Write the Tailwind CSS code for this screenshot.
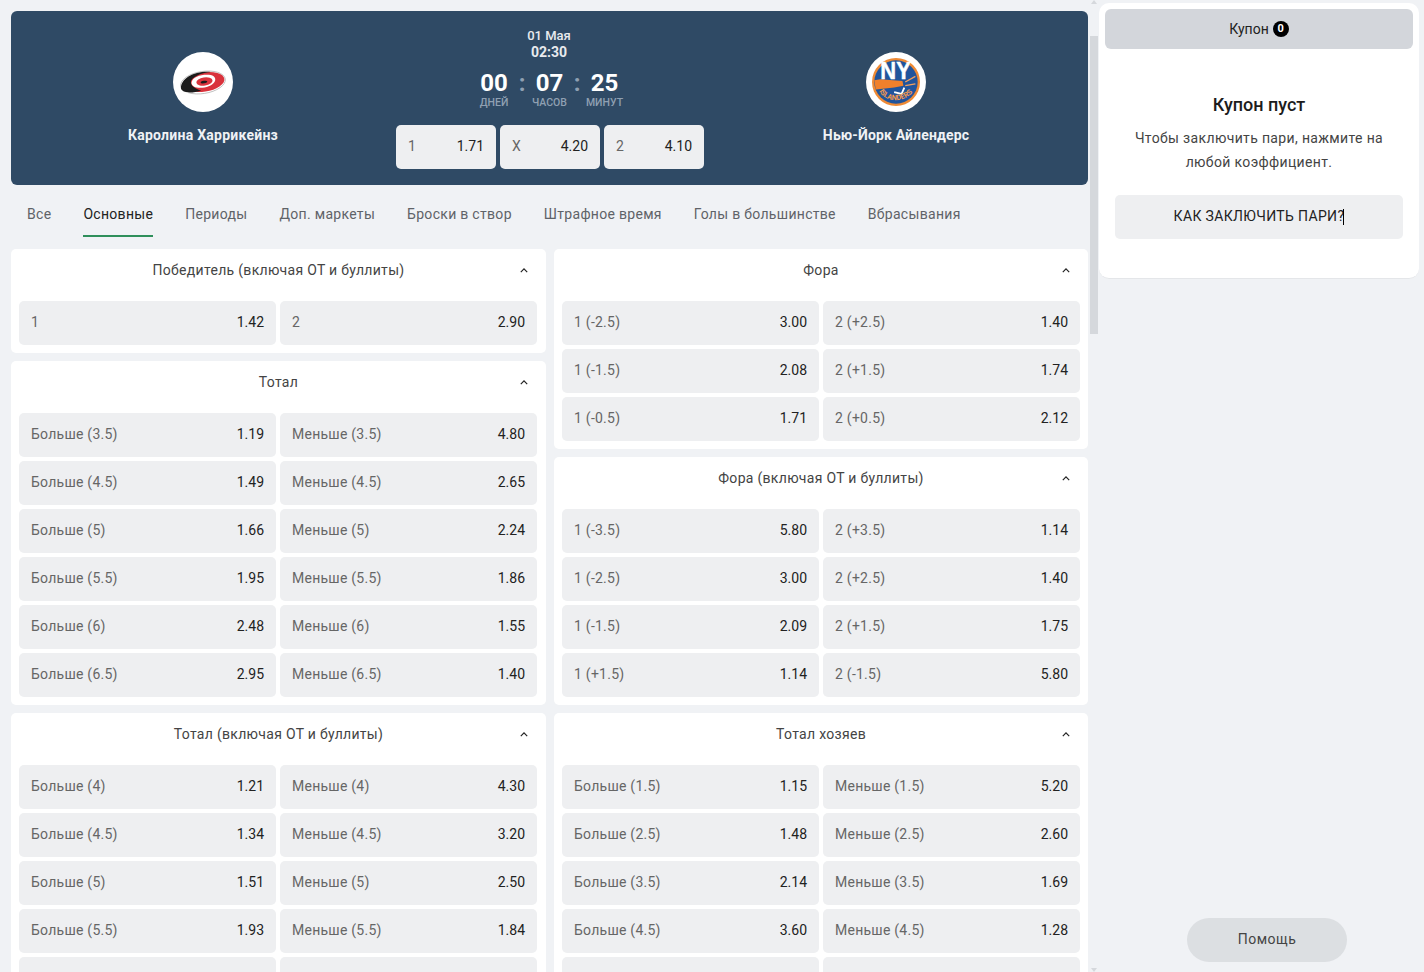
<!DOCTYPE html>
<html lang="ru">
<head>
    <meta charset="UTF-8">
    <meta name="viewport" content="width=device-width, initial-scale=1.0">
    <title>Каролина Харрикейнз - Нью-Йорк Айлендерс</title>
    <script src="https://cdn.jsdelivr.net/npm/@tailwindcss/browser@4"></script>
</head>
<body class="relative h-screen overflow-hidden bg-[#f0f2f5] font-['Roboto',sans-serif] text-[14px]">
    <div class="flex h-full items-start">
        <!-- Main column -->
        <main class="w-[1077px] ml-[11px] mt-[11px] shrink-0">
            <!-- Match header -->
            <section class="h-[174px] bg-[#2f4a65] rounded-md flex text-white relative">
                <div class="absolute left-[116px] top-[41px] w-[152px] flex flex-col items-center">
                    <div class="w-[60px] h-[60px] rounded-full bg-white flex items-center justify-center">
                        <svg viewBox="0 0 50 30" class="w-[48px] h-[29px]">
                            <ellipse cx="25" cy="15" rx="23.500" ry="11.500" transform="rotate(-9 25 15)" fill="#fff" stroke="#a8a8a8" stroke-width="0.7"/>
                            <ellipse cx="26" cy="14.500" rx="21.500" ry="10" transform="rotate(-9 26 14.500)" fill="#d9323c"/>
                            <path d="M2 21C2 11 15 3 33 4C24 5 16 8 13 12.500C11 16 14 21 23 23.500C13 26.500 3 26 2 21Z" fill="#1b1b1b"/>
                            <path d="M13 15C14 9 23 6.500 31 7C37 7.500 39 11 37 14.500C34 19 27 21 20 20.500C15.500 20 13 18 13 15Z" fill="#fff"/>
                            <ellipse cx="26.500" cy="14" rx="8.500" ry="4.300" transform="rotate(-9 26.500 14)" fill="#d9323c"/>
                            <ellipse cx="26" cy="14.500" rx="3.500" ry="1.300" transform="rotate(-9 26 14.500)" fill="#1b1b1b"/>
                        </svg>
                    </div>
                    <div class="mt-[9px] text-[14px] leading-[28px] font-bold text-[#f0f2f5] whitespace-nowrap tracking-[0.25px]">Каролина Харрикейнз</div>
                </div>

                <div class="absolute left-[385px] top-[16px] w-[308px] flex flex-col items-center">
                    <div class="pr-[2px] text-[13px] leading-[17px] font-medium text-[#e8eaee]">01 Мая</div>
                    <div class="pr-[2px] text-[14px] leading-[17px] font-bold text-[#e8eaee]">02:30</div>
                    <div class="pr-[2px] mt-[8px] flex items-start">
                        <div class="w-[56px] flex flex-col items-center">
                            <div class="text-[24px] leading-[29px] font-bold">00</div>
                            <div class="text-[10.5px] leading-[10px] font-medium text-[#8fa0b2]">ДНЕЙ</div>
                        </div>
                        <div class="text-[24px] leading-[29px] font-bold text-[#8fa0b2] w-0 flex justify-center">:</div>
                        <div class="w-[55px] flex flex-col items-center">
                            <div class="text-[24px] leading-[29px] font-bold">07</div>
                            <div class="text-[10.5px] leading-[10px] font-medium text-[#8fa0b2]">ЧАСОВ</div>
                        </div>
                        <div class="text-[24px] leading-[29px] font-bold text-[#8fa0b2] w-0 flex justify-center">:</div>
                        <div class="w-[55px] flex flex-col items-center">
                            <div class="text-[24px] leading-[29px] font-bold">25</div>
                            <div class="text-[10.5px] leading-[10px] font-medium text-[#8fa0b2]">МИНУТ</div>
                        </div>
                    </div>
                    <div class="mt-[17px] flex gap-1">
                        <button class="w-[100px] h-[44px] px-3 pb-[2px] flex items-center justify-between rounded-[5px] bg-[#eeeff1] tracking-[0.25px]"><span class="text-[#666]">1</span><span class="text-[#222] tracking-normal">1.71</span></button>
                        <button class="w-[100px] h-[44px] px-3 pb-[2px] flex items-center justify-between rounded-[5px] bg-[#eeeff1] tracking-[0.25px]"><span class="text-[#666]">X</span><span class="text-[#222] tracking-normal">4.20</span></button>
                        <button class="w-[100px] h-[44px] px-3 pb-[2px] flex items-center justify-between rounded-[5px] bg-[#eeeff1] tracking-[0.25px]"><span class="text-[#666]">2</span><span class="text-[#222] tracking-normal">4.10</span></button>
                    </div>
                </div>

                <div class="absolute left-[809px] top-[41px] w-[152px] flex flex-col items-center">
                    <div class="w-[60px] h-[60px] rounded-full bg-white flex items-center justify-center">
                        <svg viewBox="0 0 52 52" class="w-[48px] h-[48px]">
                            <defs><path id="arc" d="M7 35C14 49 37 50 47 33"/></defs>
                            <circle cx="26" cy="26" r="26" fill="#ee8a35"/>
                            <circle cx="26" cy="26" r="23.500" fill="#20549c"/>
                            <path d="M2.500 24L9 23L33 25L34 30L24 32L4 34Z" fill="#f0802c"/>
                            <text x="9" y="23" font-family="Liberation Sans" font-size="26" font-weight="700" fill="#fff" stroke="#fff" stroke-width="0.500" textLength="33" lengthAdjust="spacingAndGlyphs">NY</text>
                            <path d="M35 32L32 39L24 37" fill="none" stroke="#fff" stroke-width="2"/>
                            <path d="M36 26L47 20M36 30L47 28" stroke="#f0a060" stroke-width="1.500"/>
                            <text font-family="Roboto" font-size="8" font-weight="700" fill="#f59a4e"><textPath href="#arc" startOffset="1">ISLANDERS</textPath></text>
                        </svg>
                    </div>
                    <div class="mt-[9px] text-[14px] leading-[28px] font-bold text-[#f0f2f5] whitespace-nowrap tracking-[0.15px]">Нью-Йорк Айлендерс</div>
                </div>
            </section>

            <!-- Tabs -->
            <nav class="h-[52px] pl-4 flex gap-8 tracking-[0.3px] text-[#5f6368] font-[450]">
                <a class="pt-[19px] h-[52px]">Все</a>
                <a class="pt-[19px] h-[52px] text-[#222] border-b-2 border-[#2f8f5b]">Основные</a>
                <a class="pt-[19px] h-[52px]">Периоды</a>
                <a class="pt-[19px] h-[52px]">Доп. маркеты</a>
                <a class="pt-[19px] h-[52px]">Броски в створ</a>
                <a class="pt-[19px] h-[52px]">Штрафное время</a>
                <a class="pt-[19px] h-[52px]">Голы в большинстве</a>
                <a class="pt-[19px] h-[52px]">Вбрасывания</a>
            </nav>

            <!-- Markets -->
            <div class="mt-[12px] flex gap-2 items-start">
                <div id="colLeft" class="w-[535px] flex flex-col gap-2"></div>
                <div id="colRight" class="w-[534px] flex flex-col gap-2"></div>
            </div>
        </main>

        <!-- Scrollbar -->
        <div class="relative w-[8px] h-full ml-[2px] shrink-0 pt-[36px]">
            <svg viewBox="0 0 8 4" class="absolute left-0 top-0 w-[8px] h-[4px]" fill="#d5d8dc"><path d="M4 0l3 4H1z"/></svg>
            <div class="h-[298px] bg-[#d5d8dc]"></div>
            <svg viewBox="0 0 8 4" class="absolute left-0 bottom-0 w-[8px] h-[4px]" fill="#d5d8dc"><path d="M1 0h6L4 4z"/></svg>
        </div>

        <!-- Coupon -->
        <aside class="w-[320px] h-[276px] ml-[1px] mt-[3px] p-[6px] bg-white rounded-[10px] border-b border-[#e4e6e9] shrink-0">
            <button class="w-full h-[40px] rounded-md bg-[#d3d6db] flex items-center justify-center gap-1 text-[#222]">
                Купон
                <span class="w-4 h-4 rounded-full bg-black text-white text-[11px] font-bold flex items-center justify-center">0</span>
            </button>
            <h3 class="mt-[44px] text-center text-[18px] leading-[24px] font-medium text-[#1c1c1c]">Купон пуст</h3>
            <p class="mt-[9px] text-center leading-[24px] tracking-[0.35px] text-[#444]">Чтобы заключить пари, нажмите на<br>любой коэффициент.</p>
            <div class="mx-[10px] mt-[21px] h-[44px] pb-px rounded-[5px] bg-[#eeeff1] flex items-center justify-center tracking-[0.35px] text-[#222]">КАК ЗАКЛЮЧИТЬ ПАРИ?<span class="w-px h-[16px] bg-black -ml-px"></span></div>
        </aside>
    </div>

    <!-- Floating help button -->
    <button class="absolute left-[1187px] top-[918px] w-[160px] h-[44px] pb-[2px] rounded-full bg-[#dcdfe2] text-[#444] tracking-[0.5px]">Помощь</button>

    <script>
        const leftMarkets = [
            { title: "Победитель (включая ОТ и буллиты)", rows: [["1", "1.42", "2", "2.90"]] },
            { title: "Тотал", rows: [
                ["Больше (3.5)", "1.19", "Меньше (3.5)", "4.80"],
                ["Больше (4.5)", "1.49", "Меньше (4.5)", "2.65"],
                ["Больше (5)", "1.66", "Меньше (5)", "2.24"],
                ["Больше (5.5)", "1.95", "Меньше (5.5)", "1.86"],
                ["Больше (6)", "2.48", "Меньше (6)", "1.55"],
                ["Больше (6.5)", "2.95", "Меньше (6.5)", "1.40"]
            ] },
            { title: "Тотал (включая ОТ и буллиты)", rows: [
                ["Больше (4)", "1.21", "Меньше (4)", "4.30"],
                ["Больше (4.5)", "1.34", "Меньше (4.5)", "3.20"],
                ["Больше (5)", "1.51", "Меньше (5)", "2.50"],
                ["Больше (5.5)", "1.93", "Меньше (5.5)", "1.84"],
                ["", "", "", ""]
            ] }
        ];
        const rightMarkets = [
            { title: "Фора", rows: [
                ["1 (-2.5)", "3.00", "2 (+2.5)", "1.40"],
                ["1 (-1.5)", "2.08", "2 (+1.5)", "1.74"],
                ["1 (-0.5)", "1.71", "2 (+0.5)", "2.12"]
            ] },
            { title: "Фора (включая ОТ и буллиты)", rows: [
                ["1 (-3.5)", "5.80", "2 (+3.5)", "1.14"],
                ["1 (-2.5)", "3.00", "2 (+2.5)", "1.40"],
                ["1 (-1.5)", "2.09", "2 (+1.5)", "1.75"],
                ["1 (+1.5)", "1.14", "2 (-1.5)", "5.80"]
            ] },
            { title: "Тотал хозяев", rows: [
                ["Больше (1.5)", "1.15", "Меньше (1.5)", "5.20"],
                ["Больше (2.5)", "1.48", "Меньше (2.5)", "2.60"],
                ["Больше (3.5)", "2.14", "Меньше (3.5)", "1.69"],
                ["Больше (4.5)", "3.60", "Меньше (4.5)", "1.28"],
                ["", "", "", ""]
            ] }
        ];

        function oddButton(label, odd) {
            return `<button class="h-[44px] px-3 pb-[2px] flex items-center justify-between rounded-[5px] bg-[#eeeff1] tracking-[0.25px]"><span class="text-[#666]">${label}</span><span class="text-[#222] tracking-normal">${odd}</span></button>`;
        }

        function renderMarket(market) {
            const rows = market.rows.map(r => oddButton(r[0], r[1]) + oddButton(r[2], r[3])).join("");
            return `<section class="bg-white rounded-[5px] px-2 pb-2">
                <header class="relative h-[52px] pb-[10px] flex items-center justify-center tracking-[0.3px] text-[#444]">
                    ${market.title}
                    <svg viewBox="0 0 10 6" class="absolute right-[10px] top-[19px] w-[8px] h-[5px]" fill="none" stroke="#222" stroke-width="1.500"><path d="M1 5l4-4 4 4"/></svg>
                </header>
                <div class="grid grid-cols-[257px_257px] gap-1">${rows}</div>
            </section>`;
        }

        document.getElementById("colLeft").innerHTML = leftMarkets.map(renderMarket).join("");
        document.getElementById("colRight").innerHTML = rightMarkets.map(renderMarket).join("");
    </script>
</body>
</html>
